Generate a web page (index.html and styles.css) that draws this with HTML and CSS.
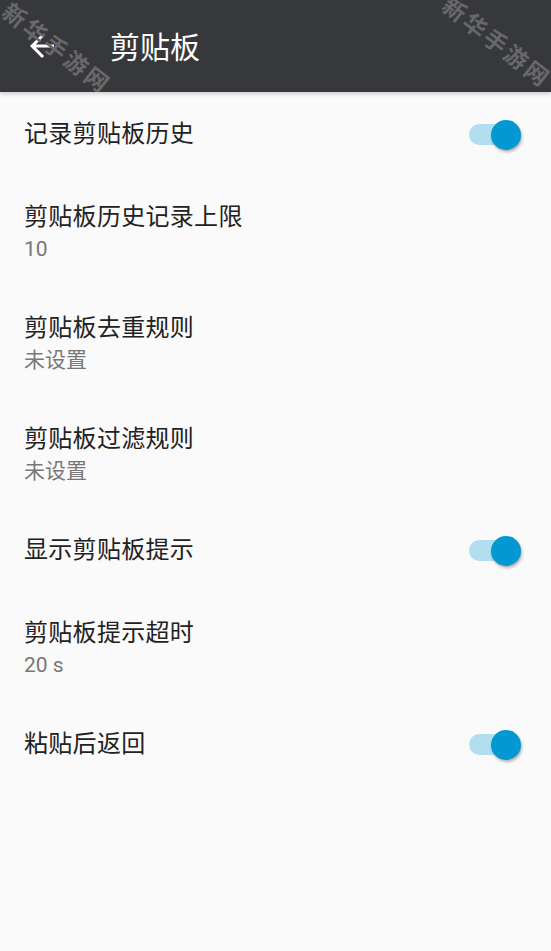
FILE: index.html
```html
<!DOCTYPE html>
<html lang="zh-CN">
<head>
    <meta charset="UTF-8">
    <meta name="viewport" content="width=device-width, initial-scale=1.0">
    <title>剪贴板</title>
    <link rel="stylesheet" href="styles.css">
</head>
<body>
    <div class="toolbar">
        <svg class="back" viewBox="0 0 24 24" width="36" height="36">
            <path d="M20 11H7.83l5.59-5.59L12 4l-8 8 8 8 1.41-1.41L7.83 13H20v-2z" fill="#fff"/>
        </svg>
        <h1 class="toolbar-title">剪贴板</h1>
        <span class="watermark wm-left">新华手游网</span>
        <span class="watermark wm-right">新华手游网</span>
    </div>

    <div class="prefs">
        <div class="pref">
            <div class="pref-text">
                <div class="pref-title">记录剪贴板历史</div>
            </div>
            <div class="switch on"><span class="track"></span><span class="thumb"></span></div>
        </div>
        <div class="pref">
            <div class="pref-text">
                <div class="pref-title">剪贴板历史记录上限</div>
                <div class="pref-summary">10</div>
            </div>
        </div>
        <div class="pref">
            <div class="pref-text">
                <div class="pref-title">剪贴板去重规则</div>
                <div class="pref-summary">未设置</div>
            </div>
        </div>
        <div class="pref">
            <div class="pref-text">
                <div class="pref-title">剪贴板过滤规则</div>
                <div class="pref-summary">未设置</div>
            </div>
        </div>
        <div class="pref">
            <div class="pref-text">
                <div class="pref-title">显示剪贴板提示</div>
            </div>
            <div class="switch on"><span class="track"></span><span class="thumb"></span></div>
        </div>
        <div class="pref">
            <div class="pref-text">
                <div class="pref-title">剪贴板提示超时</div>
                <div class="pref-summary">20 s</div>
            </div>
        </div>
        <div class="pref">
            <div class="pref-text">
                <div class="pref-title">粘贴后返回</div>
            </div>
            <div class="switch on"><span class="track"></span><span class="thumb"></span></div>
        </div>
    </div>
</body>
</html>
```

FILE: styles.css
```css
html, body {
    margin: 0;
    padding: 0;
}

body {
    font-family: Roboto, "Noto Sans CJK SC", sans-serif;
    background-color: #fafafa;
    min-height: 951px;
    overflow: hidden;
}

.toolbar {
    position: relative;
    display: flex;
    align-items: center;
    height: 92px;
    padding-left: 24px;
    background-color: #37383c;
    box-shadow: 0 2px 4px rgba(0,0,0,0.18);
    z-index: 1;
    overflow: hidden;
}

.back {
    display: block;
    flex: none;
}

.toolbar-title {
    margin: 0 0 0 50px;
    font-size: 30px;
    font-weight: 400;
    color: #fff;
    line-height: 36px;
    padding-top: 3px;
}

/* watermark over the bar */
.watermark {
    position: absolute;
    font-size: 23px;
    font-weight: 700;
    color: #68686a;
    letter-spacing: 3px;
    white-space: nowrap;
    transform: rotate(38deg);
    transform-origin: 0 0;
    line-height: 1;
}

.wm-left {
    left: 12px;
    top: 0;
}

.wm-right {
    left: 452px;
    top: -6px;
}

.pref {
    display: flex;
    align-items: center;
    padding: 25px 30px 23px 24px;
}

.pref-text {
    flex: 1;
}

.pref-title {
    font-size: 24px;
    line-height: 35px;
    letter-spacing: 0.3px;
    color: #222;
}

.pref-summary {
    font-size: 21px;
    line-height: 28px;
    color: #777;
}

.switch {
    position: relative;
    width: 52px;
    height: 30px;
}

.track {
    position: absolute;
    left: 0;
    top: 4.5px;
    width: 51px;
    height: 21px;
    border-radius: 11px;
    background-color: #b2dff0;
}

.thumb {
    position: absolute;
    right: 0;
    top: 0;
    width: 30px;
    height: 30px;
    border-radius: 50%;
    background-color: #0398d3;
    box-shadow: 1px 2px 3px rgba(0,0,0,0.3);
}
```
